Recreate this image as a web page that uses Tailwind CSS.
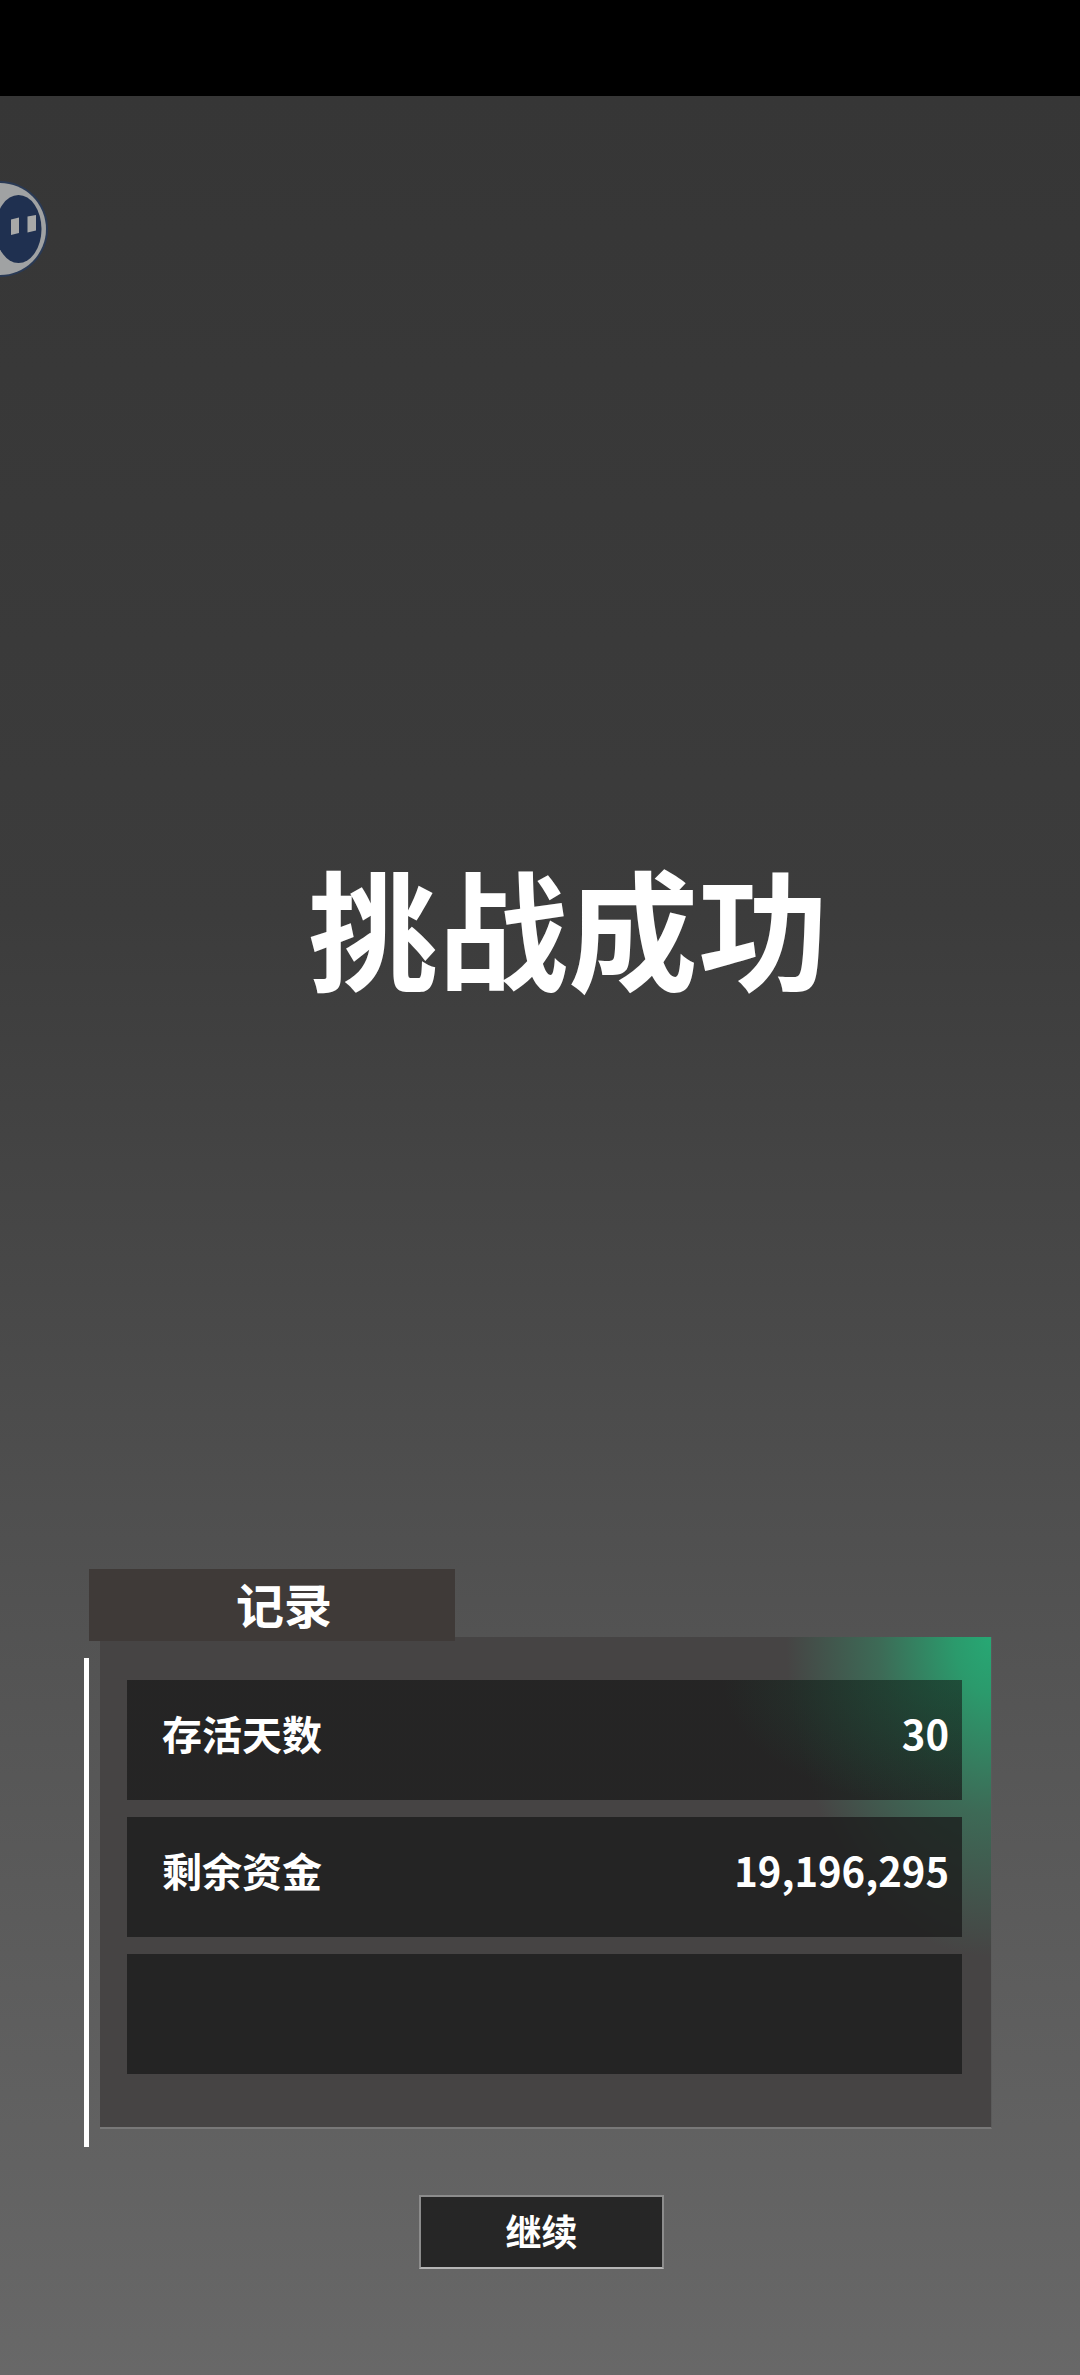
<!DOCTYPE html>
<html lang="zh-CN">
<head>
  <meta charset="UTF-8" />
  <meta name="viewport" content="width=device-width, initial-scale=1.0" />
  <title>挑战成功</title>
  <script src="https://cdn.jsdelivr.net/npm/@tailwindcss/browser@4"></script>
</head>
<body class="bg-black font-['Noto_Sans_CJK_SC','Noto_Sans',sans-serif] text-white">
  <div class="h-[96px] bg-black"></div>

  <main class="relative h-[2279px] overflow-hidden bg-[linear-gradient(#363636_0%,#3c3c3c_36%,#525252_66%,#686868_100%)]">
    <!-- floating ball, cut off by the left edge -->
    <svg class="absolute left-0 top-[84px]" width="52" height="100" viewBox="0 0 52 100">
      <circle cx="0" cy="49" r="48" fill="#2a3a55" />
      <circle cx="0" cy="49" r="46" fill="#a0a2a3" />
      <ellipse cx="18.5" cy="49" rx="23" ry="34" fill="#1f3050" />
      <path d="M11 39.5 L19 37.5 L19 53 L11 55 Z" fill="#a8a9a8" />
      <path d="M27.5 36.5 L36 35 L36 50.5 L27.5 52.5 Z" fill="#a8a9a8" />
    </svg>

    <h1 class="mt-[763px] pl-[308px] text-[130px] leading-none font-bold whitespace-nowrap">挑战成功</h1>

    <section class="mt-[580px] pl-[89px]">
      <div class="relative z-10 -mb-[4px] flex h-[72px] w-[366px] items-center justify-center bg-[#3f3a38] pb-[5px] pl-[24px] text-[48px] font-bold">记录</div>

      <div class="relative ml-[11px] flex h-[492px] w-[892px] flex-col gap-[17px] border-r border-b-2 border-[#787878] border-r-[#5a5a5a] bg-[radial-gradient(ellipse_205px_320px_at_100%_0%,#27a874_0%,#2b9a6c_18%,rgba(60,110,88,0.9)_55%,rgba(70,68,68,0)_100%),linear-gradient(#464444,#464444)] pl-[27px] pr-[29px] pt-[43px]">
        <div class="absolute left-[-16px] top-[21px] h-[489px] w-[5px] bg-white"></div>

        <div class="flex h-[120px] items-center justify-between bg-[radial-gradient(ellipse_240px_130px_at_100%_0%,rgba(30,110,75,0.4),rgba(30,110,75,0)),linear-gradient(rgba(26,26,26,0.75),rgba(26,26,26,0.75))] pb-[14px] pl-[35px] pr-[13px] text-[40px] font-bold">
          <span>存活天数</span>
          <span>30</span>
        </div>
        <div class="flex h-[120px] items-center justify-between bg-[#1a1a1a]/75 pb-[14px] pl-[35px] pr-[13px] text-[40px] font-bold">
          <span>剩余资金</span>
          <span>19,196,295</span>
        </div>
        <div class="h-[120px] bg-[#1a1a1a]/75"></div>
      </div>
    </section>

    <button class="ml-[419px] mt-[66px] flex h-[74px] w-[245px] items-center justify-center border-2 border-[#8c8c8c] border-b-[#b5b5b5] bg-[#262626] pb-[4px] text-[36px] font-bold">继续</button>
  </main>
</body>
</html>
